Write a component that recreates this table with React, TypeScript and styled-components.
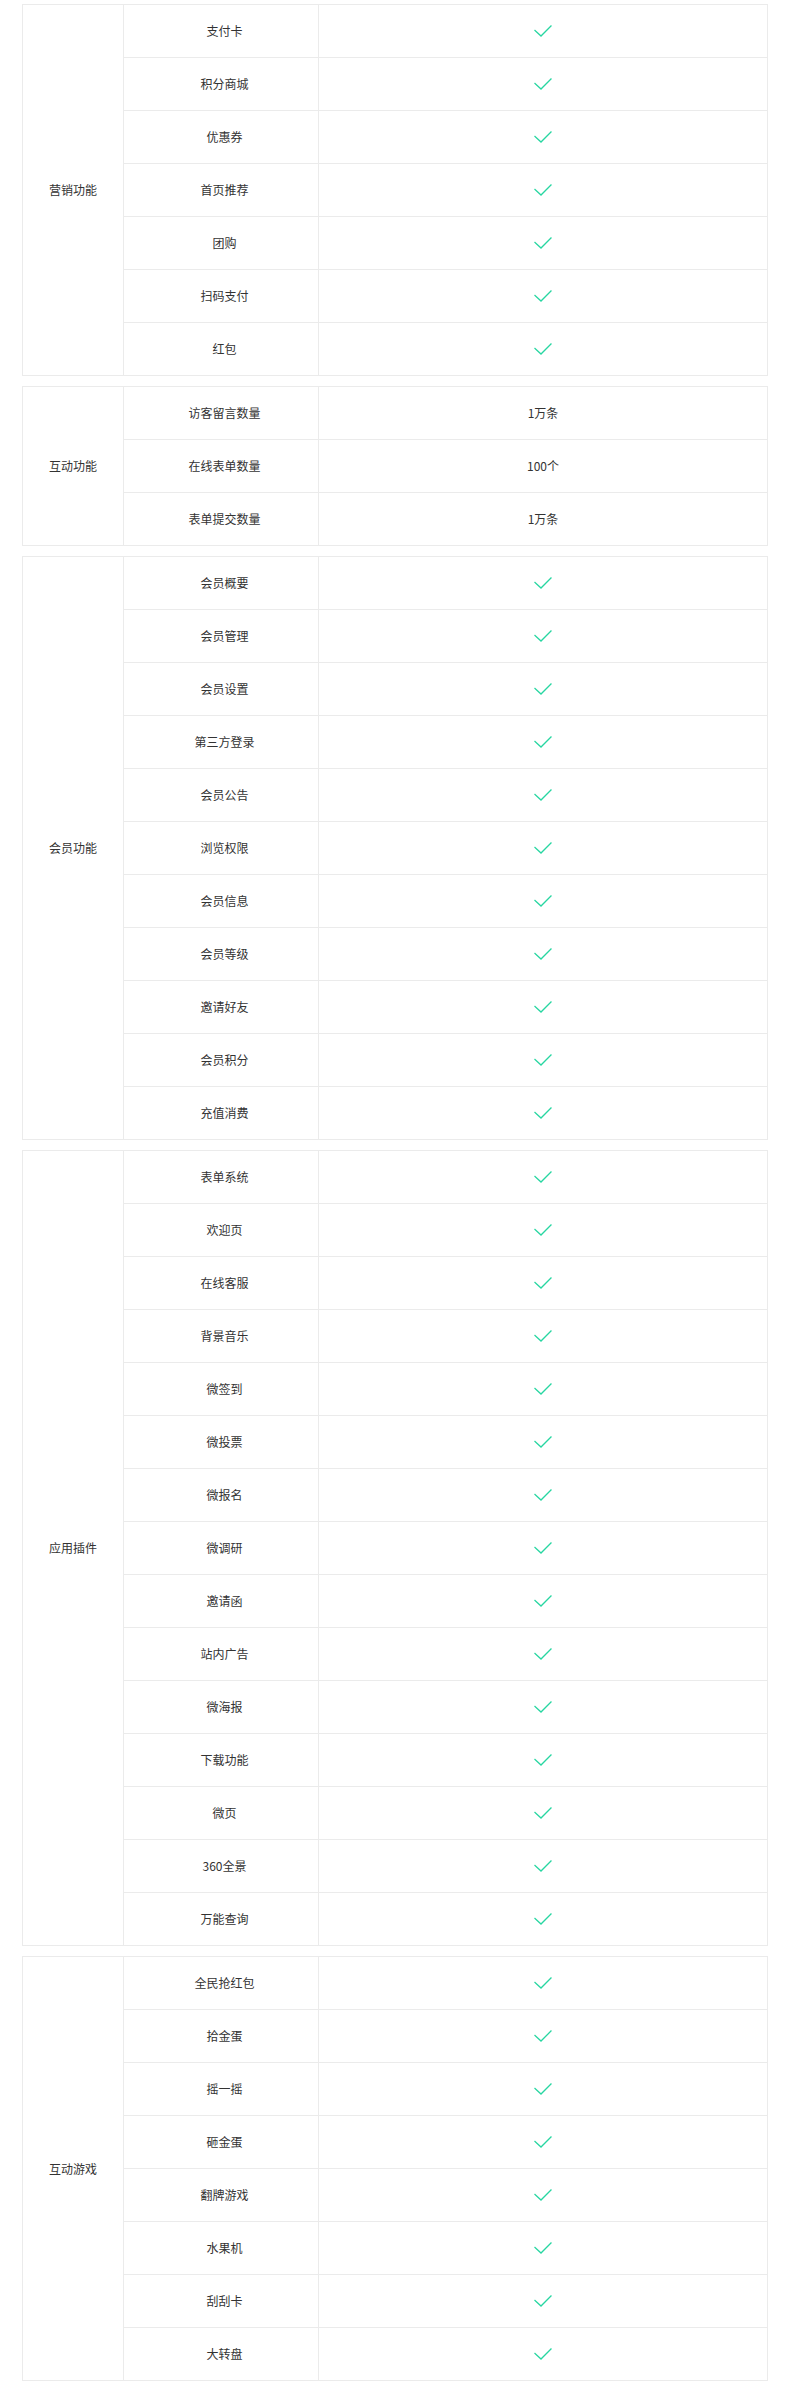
import React from "react";
import styled, { createGlobalStyle } from "styled-components";

const GlobalStyle = createGlobalStyle`
  html, body {
    margin: 0;
    padding: 0;
    background: #ffffff;
  }
  body {
    font-family: "Noto Sans CJK SC", "Noto Sans", "Liberation Sans", sans-serif;
    font-size: 12px;
    color: #333333;
  }
  * { box-sizing: border-box; }
`;

const Page = styled.div`
  width: 790px;
  padding: 4px 22px 0;
  display: flex;
  flex-direction: column;
  gap: 10px;
`;

const Group = styled.section`
  display: flex;
  border: 1px solid #ebebeb;
  background: #fff;
`;

const GroupLabel = styled.div`
  width: 101px;
  flex: none;
  border-right: 1px solid #ebebeb;
  display: flex;
  align-items: center;
  justify-content: center;
  line-height: 1;
`;

const Items = styled.div`
  flex: 1;
  display: flex;
  flex-direction: column;
`;

const Row = styled.div`
  box-sizing: content-box;
  height: 52px;
  display: grid;
  grid-template-columns: 195px 1fr;
  & + & {
    border-top: 1px solid #ebebeb;
  }
`;

const NameCell = styled.div`
  border-right: 1px solid #ebebeb;
  display: flex;
  align-items: center;
  justify-content: center;
  padding-left: 7px;
  line-height: 1;
`;

const ValueCell = styled.div`
  display: flex;
  align-items: center;
  justify-content: center;
  line-height: 1;
`;

const Check = () => (
  <svg width="18" height="12" viewBox="0 0 18 12" fill="none">
    <polyline
      points="1,5.5 7,11 17,1"
      stroke="#27d6a1"
      strokeWidth="1.3"
      strokeLinecap="square"
      strokeLinejoin="miter"
    />
  </svg>
);

type Item = { name: string; value?: string };
type GroupData = { label: string; items: Item[] };

const yes = (names: string[]): Item[] => names.map((name) => ({ name }));

const groups: GroupData[] = [
  {
    label: "营销功能",
    items: yes(["支付卡", "积分商城", "优惠券", "首页推荐", "团购", "扫码支付", "红包"]),
  },
  {
    label: "互动功能",
    items: [
      { name: "访客留言数量", value: "1万条" },
      { name: "在线表单数量", value: "100个" },
      { name: "表单提交数量", value: "1万条" },
    ],
  },
  {
    label: "会员功能",
    items: yes([
      "会员概要",
      "会员管理",
      "会员设置",
      "第三方登录",
      "会员公告",
      "浏览权限",
      "会员信息",
      "会员等级",
      "邀请好友",
      "会员积分",
      "充值消费",
    ]),
  },
  {
    label: "应用插件",
    items: yes([
      "表单系统",
      "欢迎页",
      "在线客服",
      "背景音乐",
      "微签到",
      "微投票",
      "微报名",
      "微调研",
      "邀请函",
      "站内广告",
      "微海报",
      "下载功能",
      "微页",
      "360全景",
      "万能查询",
    ]),
  },
  {
    label: "互动游戏",
    items: yes(["全民抢红包", "拾金蛋", "摇一摇", "砸金蛋", "翻牌游戏", "水果机", "刮刮卡", "大转盘"]),
  },
];

export default function App() {
  return (
    <>
      <GlobalStyle />
      <Page>
        {groups.map((g) => (
          <Group key={g.label}>
            <GroupLabel>{g.label}</GroupLabel>
            <Items>
              {g.items.map((it) => (
                <Row key={it.name}>
                  <NameCell>{it.name}</NameCell>
                  <ValueCell>{it.value ? it.value : <Check />}</ValueCell>
                </Row>
              ))}
            </Items>
          </Group>
        ))}
      </Page>
    </>
  );
}
